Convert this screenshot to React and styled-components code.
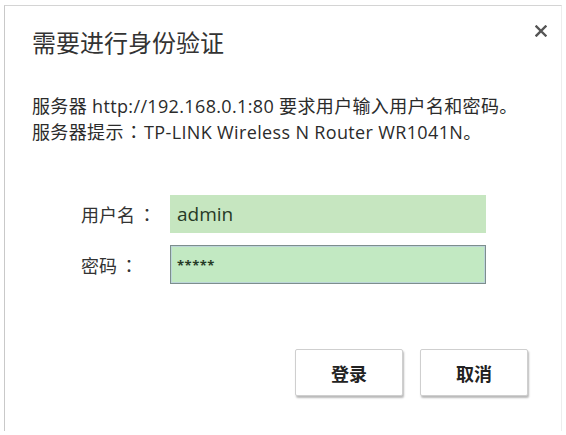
import React from "react";
import styled, {createGlobalStyle} from "styled-components";

const GlobalStyle = createGlobalStyle`
    html, body{
        margin: 0;
        padding: 0;
        background: #ffffff;
    }
    body{
        font-family: "Open Sans", "Noto Sans CJK SC", sans-serif;
        color: #333;
    }
`

const fields = [
    {label: "用户名", value: "admin", kind: "text"},
    {label: "密码", value: "*****", kind: "password"}
];

class App extends React.Component{
    render(){
        return (
            <Page>
                <GlobalStyle />
                <Dialog>
                    <Header>
                        <Title>需要进行身份验证</Title>
                        <Close aria-label = "close">
                            <svg width = "12" height = "12" viewBox = "0 0 12 12">
                                <path d = "M1.5 1.5 L10.5 10.5 M10.5 1.5 L1.5 10.5" stroke = "#555" strokeWidth = "2.4" strokeLinecap = "square" />
                            </svg>
                        </Close>
                    </Header>
                    <Message>
                        <Line>服务器 http://192.168.0.1:80 要求用户输入用户名和密码。</Line>
                        <Line>服务器提示<Colon space = "1px">：</Colon>TP-LINK Wireless N Router WR1041N。</Line>
                    </Message>
                    <Form>
                        {fields.map(f => (
                            <Row key = {f.label}>
                                <Label>{f.label}<Colon space = "3px">：</Colon></Label>
                                <Field focused = {f.kind === "password"} small = {f.kind === "password"}>{f.value}</Field>
                            </Row>
                        ))}
                    </Form>
                    <Buttons>
                        <Button>登录</Button>
                        <Button>取消</Button>
                    </Buttons>
                </Dialog>
            </Page>
        )
    }
}

const Page = styled.div`
    width: 566px;
    height: 435px;
    overflow: hidden;
    padding: 5px 0 0 4px;
    box-sizing: border-box;
`
const Dialog = styled.div`
    width: 558px;
    height: 426px;
    box-sizing: border-box;
    border-left: 1px solid #c9c9c9;
    border-top: 1px solid #d4d4d4;
    border-right: 1px solid #ededed;
    background: #fff;
    padding: 0 0 0 27px;
`
const Header = styled.div`
    display: flex;
    justify-content: space-between;
    align-items: flex-start;
    padding: 21px 14px 0 0;
`
const Title = styled.h1`
    margin: 0;
    font-family: "Noto Sans CJK SC", sans-serif;
    font-size: 24px;
    font-weight: 400;
    line-height: 30px;
    color: #333;
`
const Close = styled.span`
    display: flex;
    width: 12px;
    height: 12px;
    margin-top: -2px;
`
const Colon = styled.span`
    font-family: "Noto Sans CJK JP", sans-serif;
    margin: 0 ${props => props.space} 0 ${props => props.space};
`
const Message = styled.div`
    margin-top: 37px;
    font-size: 18px;
    line-height: 25px;
    color: #2b2b2b;
`
const Line = styled.div`
    white-space: nowrap;
    letter-spacing: 0.35px;
`
const Form = styled.div`
    display: flex;
    flex-direction: column;
    gap: 12px;
    margin-top: 50px;
    padding-left: 49px;
`
const Row = styled.div`
    display: flex;
    align-items: center;
`
const Label = styled.div`
    width: 89px;
    font-family: "Noto Sans CJK SC", sans-serif;
    font-size: 18px;
    color: #333;
    white-space: nowrap;
`
const Field = styled.div`
    width: 316px;
    height: ${props => props.focused ? "39px" : "38px"};
    box-sizing: border-box;
    display: flex;
    align-items: center;
    padding-left: 6px;
    background: ${props => props.focused ? "#c2e9c2" : "#c6e6c0"};
    border: 1px solid ${props => props.focused ? "#7d8e8d" : "#c6e6c0"};
    box-shadow: ${props => props.focused ? "inset 0 0 0 1px #bcd6d8" : "none"};
    font-size: ${props => props.small ? "13px" : "19px"};
    font-weight: ${props => props.small ? 700 : 400};
    color: #263a26;
    letter-spacing: ${props => props.small ? "0.5px" : "0"};
`
const Buttons = styled.div`
    display: flex;
    justify-content: flex-end;
    gap: 17px;
    margin-top: 65px;
    padding-right: 33px;
`
const Button = styled.button`
    width: 108px;
    height: 47px;
    background: #fff;
    border: 1px solid #cfcfcf;
    border-radius: 2px;
    box-shadow: 1px 2px 2px rgba(0,0,0,0.28);
    font-family: "Noto Sans CJK SC", sans-serif;
    font-size: 18px;
    font-weight: 700;
    color: #222;
    cursor: pointer;
`

export default App;
